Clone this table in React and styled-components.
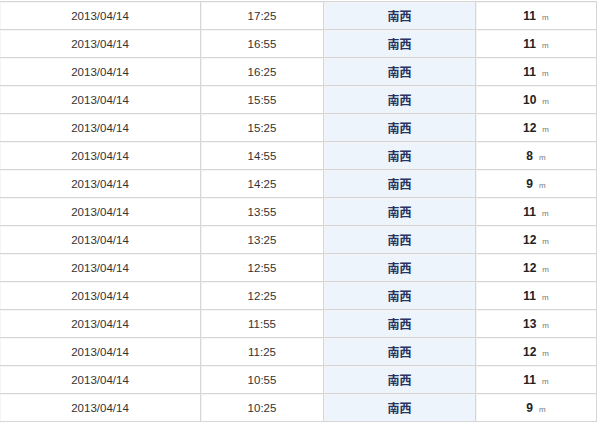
import React from 'react'
import styled, { createGlobalStyle } from 'styled-components'

const GlobalStyle = createGlobalStyle`
  html, body {
    margin: 0;
    padding: 0;
    background: #ffffff;
    overflow: hidden;
  }
`

const Page = styled.div`
  padding-top: 1px;
  width: 600px;
  height: 430px;
  overflow: hidden;
`

const Table = styled.table`
  border-collapse: collapse;
  width: 598px;
  margin-left: -1px;
  table-layout: fixed;
  font-family: "Liberation Sans", Arial, "Noto Sans CJK JP", sans-serif;
`

const Row = styled.tr`
  height: 28px;
`

const Cell = styled.td`
  width: ${props => props.$width}px;
  border: 1px solid #d6d6d6;
  box-shadow: inset 1px 1px 0 #f4f4f4;
  padding: 0;
  text-align: center;
  vertical-align: middle;
  font-size: 11.5px;
  color: #333333;
  background: ${props => (props.$tint ? '#eef4fc' : '#ffffff')};
`

const Direction = styled.span`
  font-family: "Noto Sans CJK JP", sans-serif;
  font-weight: 700;
  font-size: 12px;
  color: #26335e;
`

const Height = styled.span`
  font-weight: 700;
  font-size: 12px;
  color: #222222;
`

const Unit = styled.span`
  font-size: 8px;
  color: #777777;
  margin-left: 6px;
`

const rows = [
  ['17:25', 11],
  ['16:55', 11],
  ['16:25', 11],
  ['15:55', 10],
  ['15:25', 12],
  ['14:55', 8],
  ['14:25', 9],
  ['13:55', 11],
  ['13:25', 12],
  ['12:55', 12],
  ['12:25', 11],
  ['11:55', 13],
  ['11:25', 12],
  ['10:55', 11],
  ['10:25', 9],
]

export default function App() {
  return (
    <Page>
      <GlobalStyle />
      <Table>
        <tbody>
          {rows.map(([time, h]) => (
            <Row key={time}>
              <Cell $width={200}>2013/04/14</Cell>
              <Cell $width={122}>{time}</Cell>
              <Cell $width={151} $tint>
                <Direction>南西</Direction>
              </Cell>
              <Cell $width={120}>
                <Height>{h}</Height>
                <Unit>m</Unit>
              </Cell>
            </Row>
          ))}
        </tbody>
      </Table>
    </Page>
  )
}
